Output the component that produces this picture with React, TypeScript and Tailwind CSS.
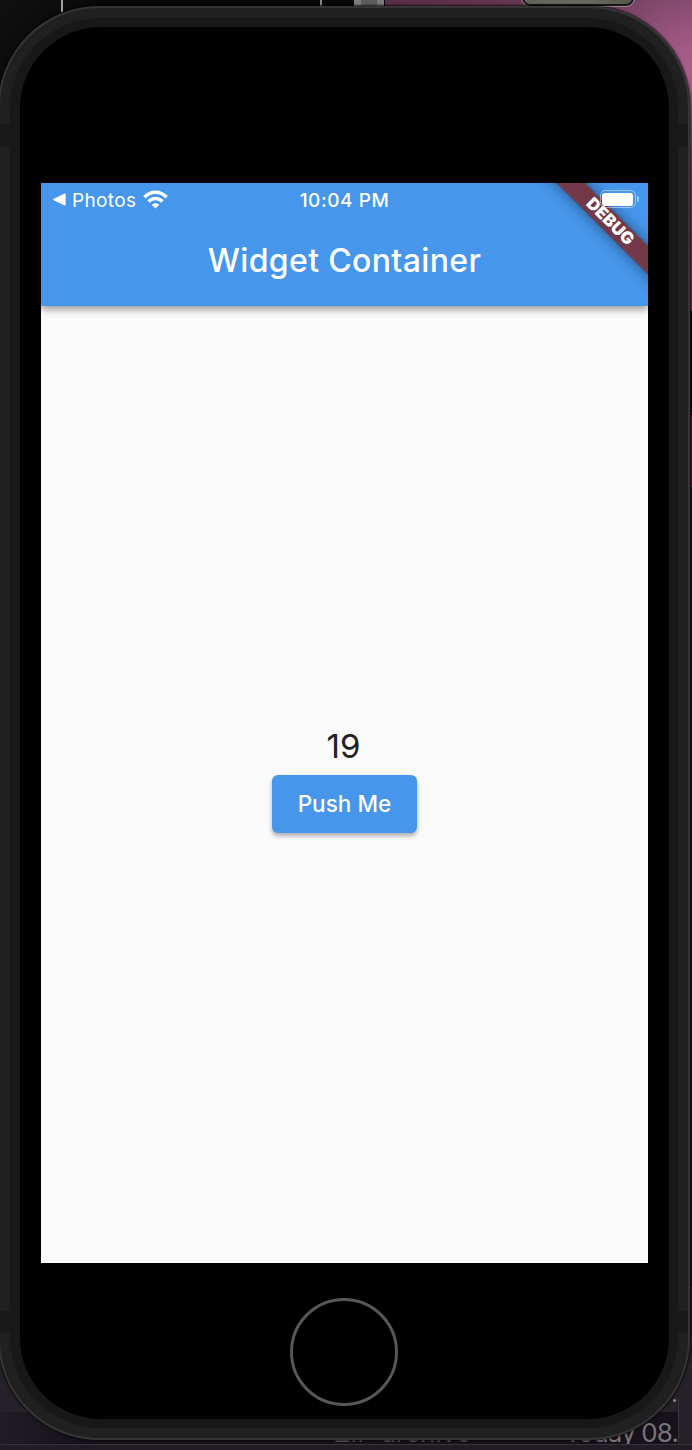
function Desktop() {
  return (
    <div className="absolute inset-0 flex flex-col justify-between bg-[#101010]">
      <div className="flex h-[311px] w-full">
        <div className="flex h-full w-[385px] items-start bg-[linear-gradient(135deg,#111111,#080808_80px)] pl-[61px]">
          <div className="h-3 w-[2px] bg-[#a0a0a0]" />
          <div className="ml-[257px] h-[7px] w-[2px] bg-[#888888]" />
          <div className="ml-[32px] h-[7px] w-[30px] border-x-[7px] border-[#7c7c7c] bg-[#5c5c5c]" />
        </div>
        <div className="h-full flex-1 overflow-hidden bg-[radial-gradient(circle_at_310px_70px,#ac5f8d_0px,#9a5580_40px,#73405f_100px,#65344f_200px,#5a2c47_320px)] pl-[137px]">
          <div className="-mt-5 h-[26px] w-[112px] rounded-lg border-2 border-[#171717] bg-[linear-gradient(90deg,#62635d,#66675f_60%,#56574f)] outline outline-1 outline-[#9b8b95]" />
        </div>
      </div>
      <div className="flex h-[976px] flex-col items-end pt-[104px]">
        <div className="h-[72px] w-1 bg-[#421f35]" />
        <div className="w-1 flex-1 bg-[#1b181d]" />
      </div>
      <div className="flex h-[163px] flex-col justify-end bg-[#27212a]">
        <div className="flex h-[13px] w-[679px] items-start justify-end border-r border-[#37323a] pr-[2px]">
          <div className="size-[3px] rounded-full bg-[#8a878c]" />
        </div>
        <div className="flex h-[32px] w-[679px] items-baseline whitespace-nowrap border-r border-[#37323a] bg-[linear-gradient(90deg,#211b25,#17121a_80px)] pl-[334px] pt-[5px] text-[26px] leading-[32px] text-[#5d5960]">
          <span className="w-[236px]">ZIP archive</span>
          <span className="tracking-[-0.9px] text-[#77737a]">Today 08.</span>
        </div>
        <div className="h-[6px] border-t border-[#38333a] bg-[#211c24]" />
      </div>
    </div>
  );
}

function SideRail() {
  return (
    <div className="flex w-[10px] shrink-0 flex-col justify-between pb-[105px] pt-[116px]">
      <div className="h-[22px] bg-[#191919]" />
      <div className="h-[22px] bg-[#191919]" />
    </div>
  );
}

function DebugBanner() {
  return (
    <div className="pointer-events-none absolute inset-0 overflow-hidden">
      <div className="absolute right-[-61.5px] top-[28.5px] flex h-[19.5px] w-[200px] rotate-45 items-center justify-center bg-[#733948] text-[16.8px] font-black leading-none tracking-[0.2px] text-white shadow-[0_0_14px_rgba(0,0,0,0.5)]">
        DEBUG
      </div>
    </div>
  );
}

function StatusBar() {
  return (
    <div className="relative flex h-[33px] items-center justify-between pl-3 pr-[9px] text-[19px] leading-none text-white">
      <div className="flex w-[245px] items-center">
        <svg width="13" height="13" viewBox="0 0 13 13" fill="currentColor">
          <path d="M0.7 5.8 11.6 0.6Q12.6 0.2 12.6 1.4V11.6Q12.6 12.8 11.6 12.4L0.7 7.2Q-.4 6.5.7 5.8Z" />
        </svg>
        <span className="ml-[6px] w-[65px] pt-px tracking-[0.35px]">Photos</span>
        <svg className="ml-[6px]" width="25" height="19" viewBox="0 0 25 19" fill="none" stroke="currentColor" strokeWidth="3.5">
          <path d="M1.4 7.2C7.5.5 17.5.5 23.6 7.2" />
          <path d="M5.6 11.5C9.5 7.5 15.5 7.5 19.4 11.5" />
          <path d="M12.5 18.6 8.7 14.8C10.8 12.6 14.2 12.6 16.3 14.8Z" fill="currentColor" stroke="none" />
        </svg>
      </div>
      <span className="whitespace-nowrap pt-[2px] text-center font-medium tracking-[0.55px]">10:04 PM</span>
      <div className="flex w-[248px] items-center justify-end gap-[1.5px] pb-px">
        <div className="h-[18px] w-[36px] rounded-[5.5px] border-[1.5px] border-white/45 p-[1.5px]">
          <div className="h-full rounded-[3px] bg-white" />
        </div>
        <div className="h-[6px] w-[1.5px] rounded-r-full bg-white/45" />
      </div>
    </div>
  );
}

export default function App() {
  return (
    <div className="relative h-[1450px] w-[692px] overflow-hidden pt-[6px] font-['Inter',sans-serif]">
      <Desktop />
      <div className="relative -ml-[2px] flex h-[1434px] w-[692px] rounded-[101px] border-2 border-[#353535] bg-[#202020] shadow-[0_0_2px_1px_rgba(0,0,0,0.7)]">
        <SideRail />
        <div className="my-[10px] flex-1 rounded-[90px] bg-[#181818] px-[9.5px] py-[9px]">
          <div className="flex h-full flex-col items-center rounded-[81px] bg-black pt-[156px]">
            <div className="ml-px flex h-[1080px] w-[607px] shrink-0 flex-col overflow-hidden bg-[#fafafa]">
              <header className="relative h-[123px] shrink-0 bg-[#4696ec] shadow-[0_3px_8px_rgba(0,0,0,0.42)]">
                <DebugBanner />
                <StatusBar />
                <h1 className="relative flex h-[90px] items-center justify-center text-[32px] font-medium tracking-[0.35px] text-white">
                  Widget Container
                </h1>
              </header>
              <main className="flex flex-1 flex-col items-center justify-center pb-[12px]">
                <p className="mb-[10px] h-[40px] pr-[2px] text-[33px] leading-[42px] text-[#212121]">19</p>
                <button className="h-[58px] w-[145px] rounded-md bg-[#4696ec] text-[22.5px] font-medium tracking-[0.05px] text-white shadow-[0_3px_4px_rgba(0,0,0,0.3)]">
                  Push Me
                </button>
              </main>
            </div>
            <div className="mt-[35px] size-[108px] shrink-0 rounded-full border-[3px] border-[#575757]" />
          </div>
        </div>
        <SideRail />
      </div>
    </div>
  );
}
